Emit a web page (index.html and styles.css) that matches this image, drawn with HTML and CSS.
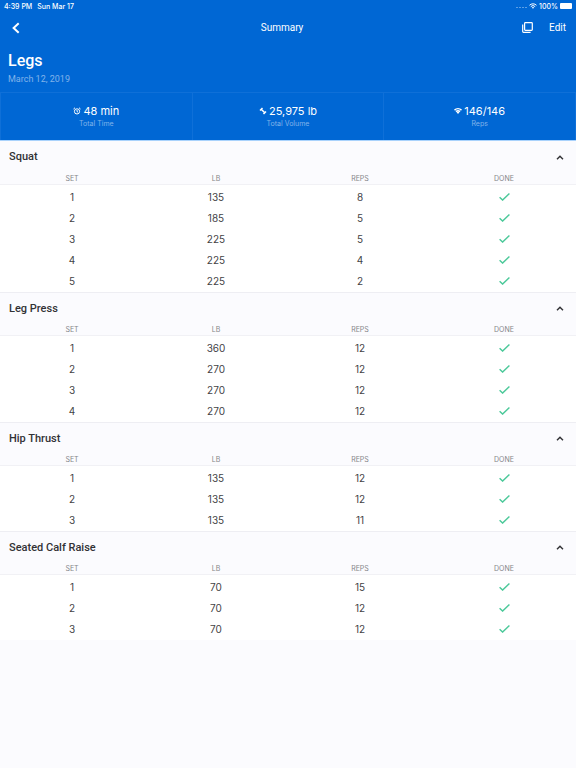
FILE: index.html
```html
<!DOCTYPE html>
<html lang="en">
<head>
  <meta charset="UTF-8" />
  <meta name="viewport" content="width=device-width, initial-scale=1.0" />
  <title>Summary</title>
  <link rel="stylesheet" href="styles.css">
</head>
<body>
  <header class="header">
    <div class="status-bar">
      <span>4:39 PM</span>
      <span>Sun Mar 17</span>
      <div class="status-right">
        <span class="signal"><i></i><i></i><i></i><i></i></span>
        <svg class="wifi" viewBox="0 0 16 12"><path d="M1 4.5a10 10 0 0 1 14 0M3.6 7.2a6.2 6.2 0 0 1 8.8 0" /><path class="solid" d="M5.6 9a3.5 3.5 0 0 1 4.8 0L8 11.6z" /></svg>
        <span>100%</span>
        <span class="battery"></span>
      </div>
    </div>

    <nav class="nav-bar">
      <button class="back-btn" aria-label="Back">
        <svg viewBox="0 0 8 12"><path d="M6.7 1.2 1.6 6l5.1 4.8" /></svg>
      </button>
      <span class="nav-title">Summary</span>
      <div class="nav-actions">
        <button class="copy-btn" aria-label="Copy">
          <svg viewBox="0 0 11 11"><rect x="2.6" y=".7" width="7.7" height="7.7" rx=".8" /><path d="M.7 2.4v7.1q0 .8.8.8h7.1" /></svg>
        </button>
        <button class="edit-btn">Edit</button>
      </div>
    </nav>

    <div class="workout">
      <h1>Legs</h1>
      <p>March 12, 2019</p>
    </div>

    <div class="stats">
      <div class="stat">
        <div class="stat-value">
          <svg viewBox="0 0 16 16"><circle cx="8" cy="8.8" r="5.2" /><path d="M8 6v3l2 1.3M1 4l3-2.5M15 4l-3-2.5" /></svg>
          48 min
        </div>
        <div class="stat-label">Total Time</div>
      </div>
      <div class="stat">
        <div class="stat-value">
          <svg viewBox="0 0 16 16"><path class="bold" d="M2 7l5-5M5 5l6 6M9 14l5-5" /></svg>
          25,975 lb
        </div>
        <div class="stat-label">Total Volume</div>
      </div>
      <div class="stat">
        <div class="stat-value">
          <svg viewBox="0 0 16 16"><path class="bold" d="M1 6.2a10.5 10.5 0 0 1 14 0M4 9.2a6 6 0 0 1 8 0" /><path class="solid" d="M5.2 10.4a4.4 4.4 0 0 1 5.6 0L8 14z" /></svg>
          146/146
        </div>
        <div class="stat-label">Reps</div>
      </div>
    </div>
  </header>

  <main id="exercises"></main>

  <script src="script.js"></script>
</body>
</html>
```
FILE: styles.css
```css
* {
  box-sizing: border-box;
}

body {
  margin: 0;
  background: #fbfbfe;
  color: #434346;
  font-family: Inter, "Liberation Sans", sans-serif;
  font-size: 10px;
}

h1, h2, p {
  margin: 0;
}

button {
  border: none;
  padding: 0;
  background: none;
  color: inherit;
  font: inherit;
  cursor: pointer;
}

svg {
  display: block;
  fill: none;
  stroke: currentColor;
}

svg .solid {
  fill: currentColor;
  stroke: none;
}

/* Header */
.header {
  background: #0067d4;
  border-bottom: 1px solid #a9d2fc;
  color: #ffffff;
}

.status-bar {
  display: flex;
  align-items: center;
  gap: 5px;
  height: 12px;
  padding: 0 4px;
  font-size: 7px;
  font-weight: 500;
}

.status-right {
  display: flex;
  align-items: center;
  gap: 2px;
  margin-left: auto;
}

.signal {
  display: flex;
  gap: 1px;
  padding-top: 3px;
}

.signal i {
  width: 2px;
  height: 1px;
  background: #5c9fe6;
}

.wifi {
  width: 8px;
  height: 6px;
  stroke-width: 2;
}

.battery {
  width: 12px;
  height: 6px;
  border-radius: 1px;
  background: #ffffff;
}

.nav-bar {
  display: flex;
  justify-content: space-between;
  align-items: center;
  height: 31px;
  padding: 0 10px 0 12px;
  font-family: Roboto, sans-serif;
  font-size: 10px;
}

.back-btn {
  width: 30px;
}

.back-btn svg {
  width: 8px;
  height: 12px;
  stroke-width: 2;
}

.nav-actions {
  display: flex;
  justify-content: flex-end;
  align-items: center;
  gap: 16px;
}

.copy-btn svg {
  width: 11px;
  height: 11px;
  stroke-width: 1.2;
}

.workout {
  padding: 9px 8px 7px;
  font-family: Roboto, sans-serif;
}

.workout h1 {
  font-size: 16px;
  font-weight: 500;
  line-height: 18px;
}

.workout p {
  padding-top: 3px;
  color: #80b3ea;
  font-size: 9px;
  line-height: 12px;
}

.stats {
  display: flex;
  border: 1px solid #0f70d8;
  border-bottom: none;
}

.stat {
  flex: 1;
  height: 47px;
  padding-top: 11px;
  text-align: center;
}

.stat + .stat {
  border-left: 1px solid #0f70d8;
}

.stat-value {
  display: flex;
  justify-content: center;
  align-items: center;
  gap: 2px;
  font-size: 11px;
  line-height: 14px;
}

.stat-value svg {
  width: 8px;
  height: 8px;
  stroke-width: 2;
}

.stat-value .bold {
  stroke-width: 3;
}

.stat-label {
  color: #80b3ea;
  font-size: 7px;
  line-height: 12px;
}

/* Exercises */
.exercise + .exercise {
  border-top: 1px solid #eeeef3;
}

.exercise h2 {
  font-family: Roboto, sans-serif;
  font-size: 11px;
  font-weight: 500;
  line-height: 14px;
}

.exercise-toggle {
  display: flex;
  justify-content: space-between;
  align-items: center;
  width: 100%;
  height: 32px;
  padding: 0 12px 0 9px;
  color: #323235;
}

.exercise + .exercise .exercise-toggle {
  height: 31px;
}

.exercise-toggle svg {
  width: 8px;
  height: 5px;
  stroke-width: 1.4;
}

.exercise-toggle[aria-expanded="false"] svg {
  transform: rotate(180deg);
}

.sets {
  width: 100%;
  table-layout: fixed;
  border-collapse: separate;
  border-spacing: 0;
  text-align: center;
}

.sets th {
  height: 12px;
  padding: 0;
  border-bottom: 1px solid #f1f1f5;
  color: #858589;
  font-size: 7px;
  font-weight: 400;
  line-height: 11px;
}

.sets td {
  height: 21px;
  padding: 0;
  background: #ffffff;
  line-height: 14px;
}

.sets tr:first-child td {
  height: 22px;
  padding-top: 1px;
}

.sets tr:last-child td {
  height: 22px;
  padding-bottom: 1px;
}

.sets svg {
  width: 11px;
  height: 8px;
  margin: 0 auto;
  color: #4cc99a;
  stroke-width: 1.4;
}
```
FILE: script.js
```js
const exercises = [
  { name: "Squat", sets: [[135, 8], [185, 5], [225, 5], [225, 4], [225, 2]] },
  { name: "Leg Press", sets: [[360, 12], [270, 12], [270, 12], [270, 12]] },
  { name: "Hip Thrust", sets: [[135, 12], [135, 12], [135, 11]] },
  { name: "Seated Calf Raise", sets: [[70, 15], [70, 12], [70, 12]] }
];

const check = `<svg viewBox="0 0 11 8" role="img" aria-label="Done"><path d="M.6 4.2 3.6 7.1 10.4.6" /></svg>`;

document.getElementById("exercises").innerHTML = exercises.map((exercise, i) => `
  <section class="exercise">
    <h2>
      <button class="exercise-toggle" aria-expanded="true" aria-controls="sets${i}">
        ${exercise.name}
        <svg viewBox="0 0 8 5"><path d="M1 4.3 4 1.2l3 3.1" /></svg>
      </button>
    </h2>
    <table class="sets" id="sets${i}">
      <thead>
        <tr><th>SET</th><th>LB</th><th>REPS</th><th>DONE</th></tr>
      </thead>
      <tbody>
        ${exercise.sets.map(([lb, reps], n) => `<tr><td>${n + 1}</td><td>${lb}</td><td>${reps}</td><td>${check}</td></tr>`).join("")}
      </tbody>
    </table>
  </section>
`).join("");

document.querySelectorAll(".exercise-toggle").forEach(button => {
  button.addEventListener("click", () => {
    const open = button.getAttribute("aria-expanded") === "true";
    button.setAttribute("aria-expanded", !open);
    document.getElementById(button.getAttribute("aria-controls")).hidden = open;
  });
});
```
